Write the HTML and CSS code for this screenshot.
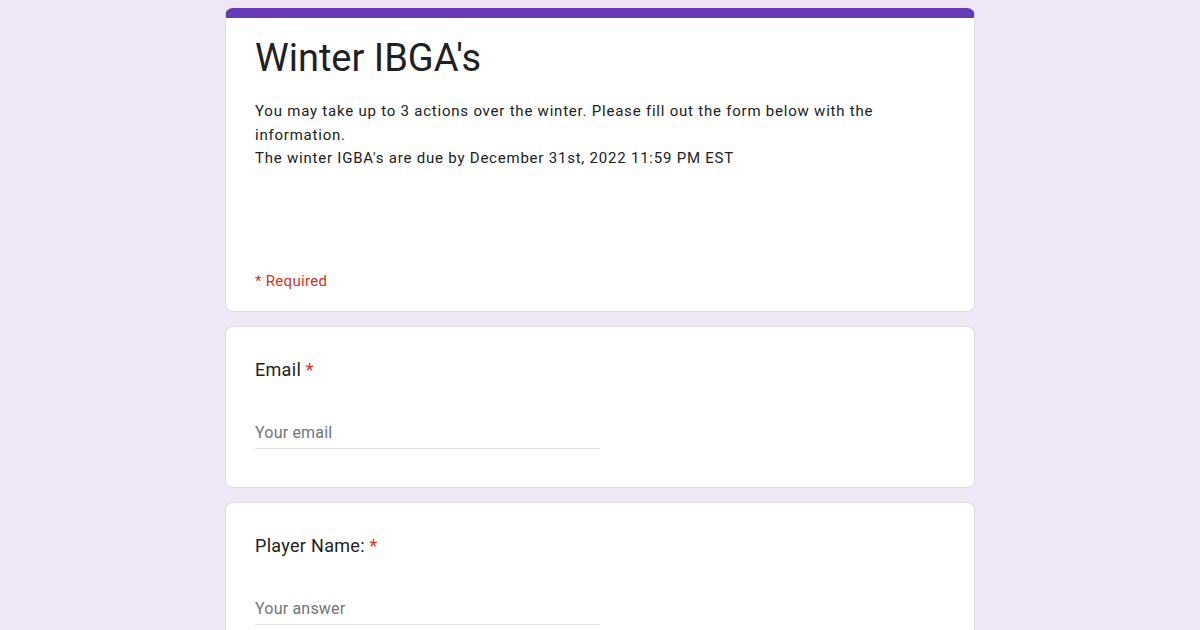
FILE: index.html
```html
<!DOCTYPE html>
<html lang="en">
<head>
  <meta charset="UTF-8">
  <meta name="viewport" content="width=device-width, initial-scale=1.0">
  <title>Winter IBGA's</title>
  <link rel="stylesheet" href="styles.css">
</head>
<body>
  <div class="form">
    <div class="card header-card">
      <h1>Winter IBGA's</h1>
      <div class="description">
        You may take up to 3 actions over the winter. Please fill out the form below with the information.<br>
        The winter IGBA's are due by December 31st, 2022 11:59 PM EST
      </div>
      <div class="required-note">* Required</div>
    </div>

    <div class="card question">
      <div class="label">Email <span class="star">*</span></div>
      <input class="answer" type="email" placeholder="Your email">
    </div>

    <div class="card question">
      <div class="label">Player Name: <span class="star">*</span></div>
      <input class="answer" type="text" placeholder="Your answer">
    </div>
  </div>
</body>
</html>
```

FILE: styles.css
```css
body {
  margin: 0;
  padding: 8px 0 0;
  background-color: #ede7f6;
  font-family: 'Roboto', 'Liberation Sans', sans-serif;
  color: #202124;
}
.form {
  width: 750px;
  margin: 0 auto;
  display: flex;
  flex-direction: column;
  gap: 14px;
}
.card {
  background-color: #ffffff;
  border: 1px solid #dadce0;
  border-radius: 8px;
  padding: 0 29px;
}
.header-card {
  border-top: 10px solid #673ab7;
  height: 293px;
  display: flex;
  flex-direction: column;
}
.header-card h1 {
  margin: 16px 0 0;
  font-size: 38px;
  font-weight: 400;
  line-height: 48px;
}
.description {
  margin-top: 18px;
  padding-right: 40px;
  font-size: 15px;
  line-height: 23.5px;
  letter-spacing: 0.78px;
}
.required-note {
  margin-top: auto;
  margin-bottom: 21px;
  color: #d93025;
  font-size: 15px;
  letter-spacing: 0.3px;
}
.question {
  height: 160px;
}
.label {
  margin-top: 31px;
  font-size: 18px;
  line-height: 24px;
  letter-spacing: 0.3px;
}
.star {
  color: #d93025;
}
.answer {
  display: block;
  margin-top: 37px;
  width: 345px;
  padding: 4px 0 6px;
  border: none;
  border-bottom: 1px solid #e0e0e0;
  font-family: inherit;
  font-size: 16px;
  letter-spacing: 0.2px;
  color: #202124;
  outline: none;
}
.answer::placeholder {
  color: #70757a;
}
```
